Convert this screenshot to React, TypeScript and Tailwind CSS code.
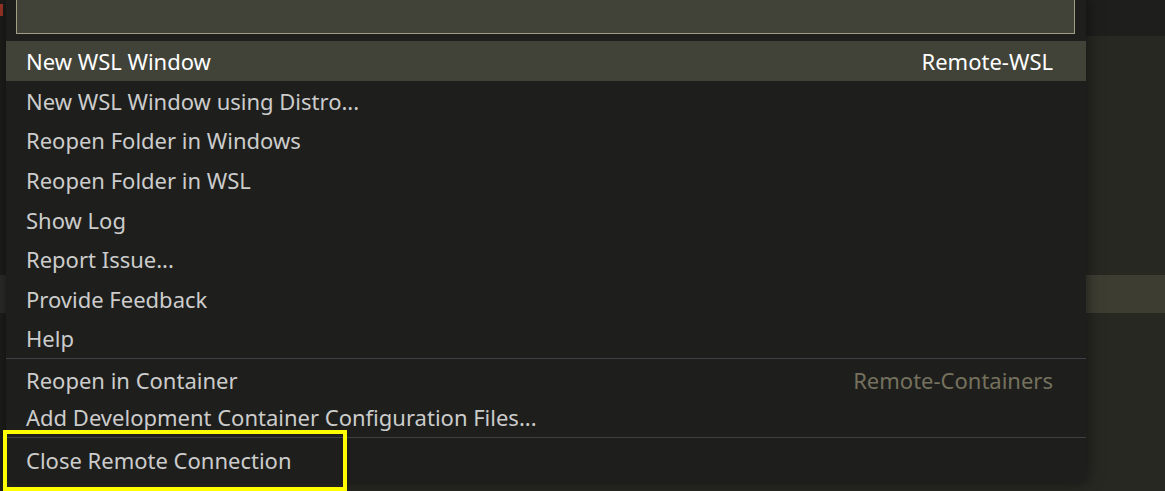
const items = [
  'New WSL Window using Distro...',
  'Reopen Folder in Windows',
  'Reopen Folder in WSL',
  'Show Log',
  'Report Issue...',
  'Provide Feedback',
  'Help',
]

export default function App() {
  return (
    <div
      className="relative flex h-[491px] w-[1165px] overflow-hidden bg-[#272822] text-[22px] leading-none text-[#cccccc]"
      style={{ fontFamily: '"Noto Sans", "Open Sans", sans-serif' }}
    >
      {/* editor gutter peeking out on the left */}
      <div className="flex w-[6px] shrink-0 flex-col bg-[#1e1f1c]">
        <div className="mt-[4px] h-[12px] w-[3px] bg-[#a3372a]" />
        <div className="mt-[259px] h-[38px] w-full bg-[#2d2e29]" />
      </div>

      {/* quick pick */}
      <div className="relative z-10 flex h-[482px] w-[1080px] shrink-0 flex-col bg-[#1e1f1c] shadow-[0_0_14px_rgba(0,0,0,0.55)]">
        <div className="pl-[10px] pr-[11px]">
          <div className="h-[34px] border-x border-b border-[#a09e84] bg-[#414339]" />
        </div>

        <div className="mt-[7px] flex flex-col">
          <div className="flex h-[40px] items-center justify-between bg-[#414339] pl-[20px] pr-[33px] text-white">
            <span>New WSL Window</span>
            <span>Remote-WSL</span>
          </div>
          {items.map((label) => (
            <div key={label} className="flex h-[39.6px] items-center pl-[20px]">
              {label}
            </div>
          ))}
        </div>

        <div className="h-px bg-[#3f3f46]" />
        <div className="mt-[2px] flex h-[38px] items-center justify-between pl-[20px] pr-[33px]">
          <span>Reopen in Container</span>
          <span className="text-[#75715e]">Remote-Containers</span>
        </div>
        <div className="flex h-[38px] items-center pb-[3px] pl-[20px]">
          Add Development Container Configuration Files...
        </div>
        <div className="h-px bg-[#3f3f46]" />
        <div className="flex h-[44px] items-center pl-[20px]">Close Remote Connection</div>
      </div>

      {/* editor on the right */}
      <div className="flex flex-1 flex-col">
        <div className="h-[36px] bg-[#1e1f1c]" />
        <div className="mt-[239px] h-[38px] bg-[#3e3d32]" />
      </div>

      {/* annotation highlight */}
      <div className="absolute left-[3px] top-[430px] z-20 h-[61px] w-[344px] border-[4px] border-[#ffff00]" />
    </div>
  )
}
